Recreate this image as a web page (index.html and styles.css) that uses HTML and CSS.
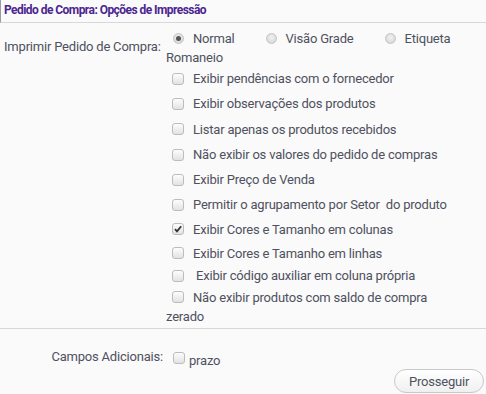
FILE: index.html
```html
<!DOCTYPE html>
<html lang="pt">
<head>
<meta charset="utf-8">
<link rel="stylesheet" href="styles.css">
</head>
<body>
<div class="panel">
  <div class="title">Pedido de Compra: Opções de Impressão</div>
  <div class="form">
    <div class="row">
      <div class="label label-left">Imprimir Pedido de Compra:</div>
      <div class="field">
        <div class="radios">
          <span class="radio checked"></span><span class="rtext">Normal</span>
          <span class="radio"></span><span class="rtext">Visão Grade</span>
          <span class="radio"></span><span class="rtext">Etiqueta</span>
        </div>
        <div class="wrap">Romaneio</div>
        <div class="check h25"><span class="box"></span><span>Exibir pendências com o fornecedor</span></div>
        <div class="check h25"><span class="box"></span><span>Exibir observações dos produtos</span></div>
        <div class="check h26"><span class="box"></span><span>Listar apenas os produtos recebidos</span></div>
        <div class="check h25"><span class="box"></span><span>Não exibir os valores do pedido de compras</span></div>
        <div class="check h25"><span class="box"></span><span>Exibir Preço de Venda</span></div>
        <div class="check h25"><span class="box"></span><span>Permitir o agrupamento por Setor&nbsp; do produto</span></div>
        <div class="check h24"><span class="box on"><svg viewBox="0 0 12 12" width="12" height="12"><path d="M3 6.2 L5 8.4 L9.2 3.2" fill="none" stroke="#333" stroke-width="1.8"/></svg></span><span>Exibir Cores e Tamanho em colunas</span></div>
        <div class="check h24"><span class="box"></span><span>Exibir Cores e Tamanho em linhas</span></div>
        <div class="check h21"><span class="box"></span><span>&nbsp;Exibir código auxiliar em coluna própria</span></div>
        <div class="check h22"><span class="box"></span><span>Não exibir produtos com saldo de compra</span></div>
        <div class="wrap2">zerado</div>
      </div>
    </div>
    <div class="sep"></div>
    <div class="row extra">
      <div class="label label-right">Campos Adicionais:</div>
      <div class="field inline"><span class="box"></span><span class="prazo">prazo</span></div>
    </div>
    <div class="actions"><button class="btn">Prosseguir</button></div>
  </div>
</div>
</body>
</html>
```

FILE: styles.css
```css
html, body {
  margin: 0;
  padding: 0;
  background: #fafafa;
}
body {
  font-family: Roboto, "Open Sans", sans-serif;
  font-size: 13px;
  color: #4f5160;
  letter-spacing: -0.2px;
}
.panel {
  width: 486px;
  height: 394px;
}
.title {
  height: 22px;
  line-height: 20px;
  padding-left: 3px;
  border-left: 1px solid #9a9aa6;
  border-bottom: 1px solid #d8d8d8;
  color: #4b2590;
  font-size: 12px;
  font-weight: 700;
  letter-spacing: -0.55px;
}
.form {
  padding-top: 6px;
}
.row {
  display: flex;
}
.label {
  width: 166px;
  flex: none;
  line-height: 18px;
}
.label-left {
  padding-left: 4px;
  width: 162px;
  padding-top: 9px;
}
.field {
  flex: 1;
}
.radios {
  display: flex;
  align-items: center;
  height: 18px;
}
.radio {
  width: 11px;
  height: 11px;
  border-radius: 50%;
  background: radial-gradient(circle at 50% 40%, #f2f2f2, #d0d0d0);
  border: 1px solid #c4c4c4;
  box-sizing: border-box;
  margin-left: 7px;
  margin-right: 9px;
  position: relative;
  flex: none;
}
.radio.checked::after {
  content: "";
  position: absolute;
  left: 2px;
  top: 2px;
  width: 5px;
  height: 5px;
  border-radius: 50%;
  background: #555;
}
.rtext {
  margin-right: 24px;
}
.wrap {
  line-height: 16px;
  margin-top: 3px;
}
.check {
  display: flex;
  align-items: center;
}
.h26 { height: 26px; }
.h25 { height: 25px; }
.h24 { height: 24px; }
.h22 { height: 22px; }
.h21 { height: 21px; }
.box {
  width: 12px;
  height: 12px;
  box-sizing: border-box;
  border: 1px solid #bcbcbc;
  border-radius: 3px;
  background: linear-gradient(#fdfdfd, #e2e2e2);
  margin-left: 6px;
  margin-right: 9px;
  flex: none;
  display: inline-block;
}
.box svg {
  display: block;
  margin: -1px;
}
.wrap2 {
  line-height: 18px;
  padding-bottom: 2px;
}
.sep {
  height: 1px;
  background: #d8d8d8;
}
.extra {
  padding-top: 19px;
}
.label-right {
  text-align: right;
  width: 163px;
  padding-right: 3px;
}
.inline {
  display: flex;
  align-items: center;
}
.inline .box {
  margin-left: 7px;
  margin-right: 4px;
}
.prazo {
  padding-top: 5px;
}
.actions {
  display: flex;
  justify-content: flex-end;
  padding-right: 2px;
  margin-top: 1px;
}
.btn {
  width: 90px;
  height: 24px;
  border: 1px solid #c8c8c8;
  border-radius: 12px;
  background: linear-gradient(#ffffff, #f0f0f0);
  font-family: inherit;
  font-size: 13px;
  color: #4f5160;
  letter-spacing: -0.2px;
  padding: 0;
}
```
